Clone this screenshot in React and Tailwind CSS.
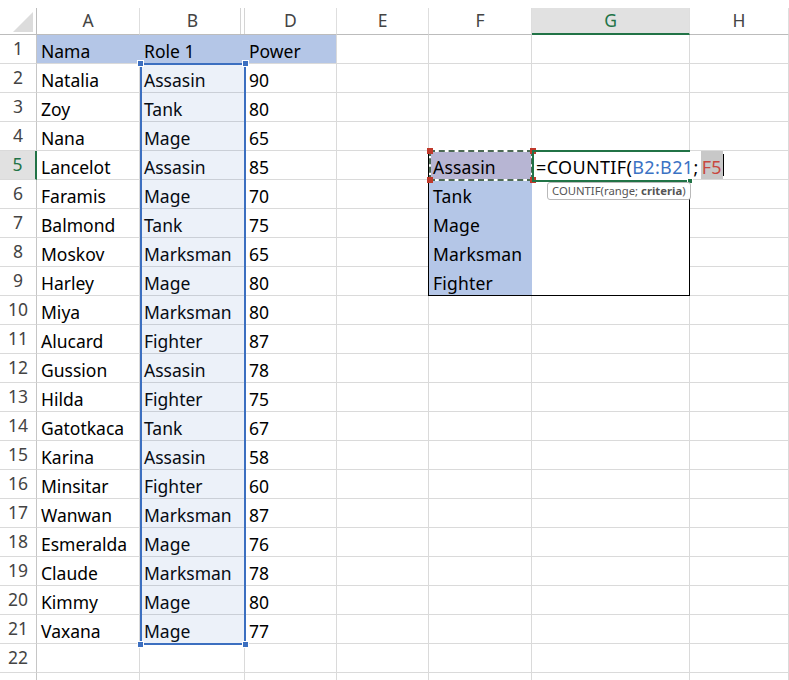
import React from "react";

const COLS = "grid grid-cols-[37px_103px_105px_92px_92px_103px_158px_99px]";

const heroes = [
  ["Natalia", "Assasin", "90"],
  ["Zoy", "Tank", "80"],
  ["Nana", "Mage", "65"],
  ["Lancelot", "Assasin", "85"],
  ["Faramis", "Mage", "70"],
  ["Balmond", "Tank", "75"],
  ["Moskov", "Marksman", "65"],
  ["Harley", "Mage", "80"],
  ["Miya", "Marksman", "80"],
  ["Alucard", "Fighter", "87"],
  ["Gussion", "Assasin", "78"],
  ["Hilda", "Fighter", "75"],
  ["Gatotkaca", "Tank", "67"],
  ["Karina", "Assasin", "58"],
  ["Minsitar", "Fighter", "60"],
  ["Wanwan", "Marksman", "87"],
  ["Esmeralda", "Mage", "76"],
  ["Claude", "Marksman", "78"],
  ["Kimmy", "Mage", "80"],
  ["Vaxana", "Mage", "77"],
];

const roles = { 5: "Assasin", 6: "Tank", 7: "Mage", 8: "Marksman", 9: "Fighter" };

function Cell({ children, className = "" }) {
  return (
    <div
      className={`flex h-[29px] items-end overflow-visible whitespace-nowrap border-b border-r border-[#dadada] pl-1 leading-[24px] ${className}`}
    >
      {children}
    </div>
  );
}

function Handle({ className }) {
  return <div className={`absolute h-[7px] w-[7px] border border-white ${className}`} />;
}

function HeaderRow() {
  const letters = ["A", "B", "D", "E", "F", "G", "H"];
  return (
    <div className={`${COLS} h-[27px] text-[#444]`}>
      <div className="relative border-b border-r border-[#bcbcbc]">
        <svg className="absolute left-0 top-0" width="37" height="27" viewBox="0 0 37 27">
          <polygon points="33,4 33,24 13,24" fill="#dcdcdc" />
        </svg>
      </div>
      {letters.map((l) => {
        let cls = "border-b border-r border-b-[#bcbcbc] border-r-[#dedede] bg-white";
        if (l === "G") cls = "border-b-2 border-r border-b-[#217346] border-r-[#dedede] bg-[#e1e1e1] text-[#217346]";
        if (l === "B")
          cls =
            "border-b border-b-[#bcbcbc] bg-white shadow-[inset_-1px_0_0_#d4d4d4,inset_-4px_0_0_#fff,inset_-5px_0_0_#d4d4d4]";
        return (
          <div key={l} className={`flex items-center justify-center leading-none ${cls}`}>
            {l}
          </div>
        );
      })}
    </div>
  );
}

function Row({ r }) {
  const data = r === 1 ? ["Nama", "Role 1", "Power"] : heroes[r - 2] || [];
  const active = r === 5;
  const blue = "bg-[#b4c6e7]";
  const inBox = r >= 5 && r <= 9;
  return (
    <div className={COLS}>
      <div
        className={`flex h-[29px] items-center justify-center border-b border-[#dadada] leading-none ${
          active ? "border-r-2 border-r-[#217346] bg-[#e1e1e1] text-[#217346]" : "border-r border-r-[#c6c6c6] text-[#444]"
        }`}
      >
        {r <= 22 ? r : ""}
      </div>
      <Cell className={r === 1 ? `${blue} border-r-[#b4c6e7]` : ""}>{data[0]}</Cell>
      <Cell className={r === 1 ? `${blue} border-r-[#b4c6e7]` : ""}>{data[1]}</Cell>
      <Cell className={r === 1 ? blue : ""}>{data[2]}</Cell>
      <Cell />
      <Cell
        className={
          inBox
            ? `${active ? "bg-[#b7b5d3]" : blue} border-r-[#b4c6e7] border-b-[#b4c6e7] tracking-[0.2px]`
            : ""
        }
      >
        {roles[r]}
      </Cell>
      <Cell className={inBox ? `border-b-white bg-white ${active ? "border-r-white" : ""}` : ""}>
        {active && (
          <div className="relative z-20 flex h-full items-end text-[18px] tracking-[0.35px]">
            <span>=COUNTIF(</span>
            <span className="text-[#3b72c4]">B2:B21</span>
            <span>;</span>
            <span className="ml-[2px] flex self-stretch items-end bg-[#c8c8c8] pl-[1px] pr-[1px] text-[#c8473f]">F5</span>
            <span className="mb-[3px] h-[22px] w-px bg-black" />
          </div>
        )}
      </Cell>
      <Cell />
    </div>
  );
}

export default function App() {
  const rows = Array.from({ length: 23 }, (_, i) => i + 1);
  return (
    <div
      className="relative h-[680px] w-[789px] overflow-hidden bg-white text-[17.5px] text-black"
      style={{ fontFamily: '"Noto Sans", "Open Sans", sans-serif' }}
    >
      <div className="h-[8px]" />
      <HeaderRow />
      {rows.map((r) => (
        <Row key={r} r={r} />
      ))}

      {/* table box F5:G9 */}
      <div className="pointer-events-none absolute left-[428px] top-[150px] h-[146px] w-[262px] border-b border-l border-t border-black" />
      <div className="pointer-events-none absolute left-[689px] top-[181px] h-[115px] w-px bg-black" />

      {/* range B2:B21 highlight */}
      <div className="pointer-events-none absolute left-[140px] top-[63px] h-[582px] w-[106px] border-2 border-[#3c6fc0] bg-[#4472c4]/10" />
      <Handle className="left-[137px] top-[60px] bg-[#3c6fc0]" />
      <Handle className="left-[242px] top-[60px] bg-[#3c6fc0]" />
      <Handle className="left-[137px] top-[641px] bg-[#3c6fc0]" />
      <Handle className="left-[242px] top-[641px] bg-[#3c6fc0]" />

      {/* criteria cell F5 marching ants */}
      <div className="pointer-events-none absolute left-[429px] top-[150px] h-[31px] w-[104px] border-2 border-white">
        <div className="absolute -inset-[2px] border-2 border-dashed border-[#4d6a55]" />
      </div>
      <div className="absolute left-[427px] top-[148px] h-[6px] w-[6px] bg-[#c0392b]" />
      <div className="absolute left-[530px] top-[148px] h-[6px] w-[6px] bg-[#c0392b]" />
      <div className="absolute left-[427px] top-[177px] h-[6px] w-[6px] bg-[#c0392b]" />
      <div className="absolute left-[530px] top-[177px] h-[6px] w-[6px] bg-[#c0392b]" />

      {/* editing cell G5 */}
      <div className="pointer-events-none absolute left-[532px] top-[150px] z-10 h-[32px] w-[158px] border-b-2 border-l-2 border-t-2 border-[#217346]" />
      <div className="absolute left-[687px] top-[178px] z-10 h-[6px] w-[6px] border border-white bg-[#217346]" />

      {/* function tooltip */}
      <div
        className="absolute left-[547px] top-[182px] z-30 flex h-[18px] items-center rounded-[3px] border border-[#b9b9b9] bg-white px-[4px] text-[11.3px] leading-none text-[#555]"
        style={{ fontFamily: '"Noto Sans", sans-serif' }}
      >
        COUNTIF(range; <span className="ml-[3px] font-bold">criteria</span>)
      </div>
    </div>
  );
}
